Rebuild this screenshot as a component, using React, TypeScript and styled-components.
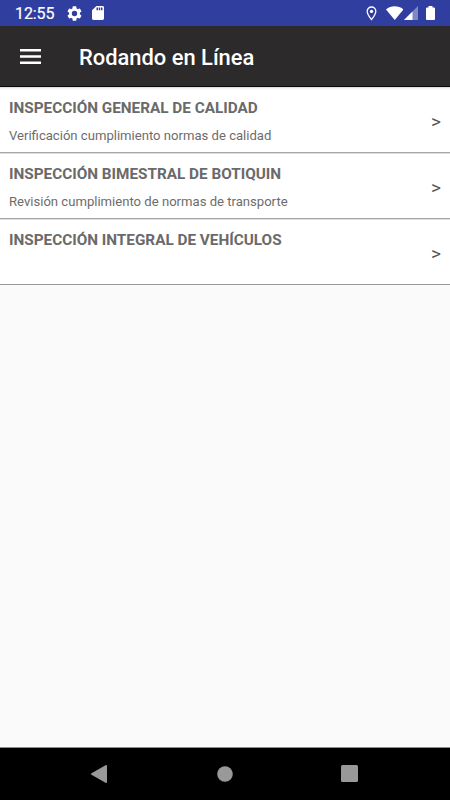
import React from "react";
import styled, { createGlobalStyle } from "styled-components";

const GlobalStyle = createGlobalStyle`
  html, body { margin: 0; background: #fafafa; }
  * { box-sizing: border-box; }
`;

const Screen = styled.div`
  display: flex;
  flex-direction: column;
  width: 100%;
  height: 800px;
  overflow: hidden;
  background: #fafafa;
  font-family: Roboto, "Noto Sans", sans-serif;
`;

const StatusBar = styled.div`
  display: flex;
  align-items: center;
  flex: 0 0 26px;
  padding: 0 15px;
  background: #303f9f;
  color: #fff;
`;

const Clock = styled.span`
  width: 51.5px;
  padding-top: 2px;
  font-size: 16px;
  line-height: 24px;
  font-weight: 400;
  -webkit-text-stroke: 0.2px #fff;
  letter-spacing: -0.1px;
`;

const Glyph = styled.svg<{ $w: number; $h: number; $gap?: number }>`
  flex: none;
  width: ${(p) => p.$w}px;
  height: ${(p) => p.$h}px;
  margin-left: ${(p) => p.$gap ?? 0}px;
`;

const Spacer = styled.div`
  flex: 1;
`;

const Toolbar = styled.header`
  display: flex;
  align-items: center;
  flex: 0 0 61px;
  padding: 0 20px;
  background: #2c2a2b;
  border-bottom: 1px solid #0c0b0c;
`;

const MenuButton = styled.button`
  display: flex;
  width: 59px;
  padding: 0;
  border: 0;
  background: none;
`;

const Title = styled.h1`
  margin: 4px 0 0;
  color: #fff;
  font-size: 21.9px;
  line-height: 28px;
  font-weight: 500;
  white-space: nowrap;
`;

const List = styled.main`
  flex: 1;
  background: #fafafa;
`;

const Row = styled.div`
  display: flex;
  align-items: center;
  height: 66px;
  padding: 0 9px;
  background: #fff;
  border-bottom: 1px solid #a6a6a6;
  box-shadow: inset 0 1px 0 #dedede;

  &:first-child {
    box-shadow: inset 0 1px 0 #dedede, inset 0 3px 2px -1px #f0f0f0;
  }

  &:last-child {
    border-bottom-color: #999;
  }
`;

const RowText = styled.div`
  flex: 1;
  height: 100%;
  padding-top: 11px;
`;

const RowTitle = styled.div`
  color: #6a6a6a;
  font-size: 15.3px;
  line-height: 20px;
  font-weight: 700;
  white-space: nowrap;
`;

const RowDetail = styled.div`
  margin-top: 8px;
  color: #6c6c6c;
  font-size: 13.1px;
  line-height: 20px;
  white-space: nowrap;
`;

const Chevron = styled.span`
  padding-top: 5px;
  color: #555;
  font-size: 19px;
  line-height: 22px;
`;

const NavBar = styled.nav`
  display: flex;
  align-items: center;
  justify-content: space-between;
  flex: 0 0 53px;
  padding: 0 92px 1px 91px;
  background: #000;
  border-top: 1px solid #8c8c8c;
`;

const items = [
  { title: "INSPECCIÓN GENERAL DE CALIDAD", detail: "Verificación cumplimiento normas de calidad" },
  { title: "INSPECCIÓN BIMESTRAL DE BOTIQUIN", detail: "Revisión cumplimiento de normas de transporte" },
  { title: "INSPECCIÓN INTEGRAL DE VEHÍCULOS", detail: "" },
];

export default function App() {
  return (
    <Screen>
      <GlobalStyle />
      <StatusBar>
        <Clock>12:55</Clock>
        <Glyph $w={15} $h={15} viewBox="2 2 20 20" fill="#fff">
          <path d="M19.14 12.94c.04-.3.06-.61.06-.94s-.02-.64-.07-.94l2.03-1.58a.5.5 0 0 0 .12-.61l-1.92-3.32a.49.49 0 0 0-.59-.22l-2.39.96a7 7 0 0 0-1.62-.94l-.36-2.54A.48.48 0 0 0 13.92 2.4h-3.84a.48.48 0 0 0-.48.41l-.36 2.54a7 7 0 0 0-1.62.94l-2.39-.96a.48.48 0 0 0-.59.22L2.72 8.87a.48.48 0 0 0 .12.61l2.03 1.58c-.05.3-.07.62-.07.94s.02.64.07.94l-2.03 1.58a.5.5 0 0 0-.12.61l1.92 3.32c.12.22.37.29.59.22l2.39-.96c.5.38 1.03.7 1.62.94l.36 2.54c.05.24.24.41.48.41h3.84c.24 0 .44-.17.48-.41l.36-2.54a7 7 0 0 0 1.62-.94l2.39.96c.22.08.47 0 .59-.22l1.92-3.32a.49.49 0 0 0-.12-.61zM12 15.6a3.6 3.6 0 1 1 0-7.2 3.6 3.6 0 0 1 0 7.2z" />
        </Glyph>
        <Glyph $w={12} $h={14} $gap={10.5} viewBox="4 2 16 20" preserveAspectRatio="none" fill="#fff">
          <path d="M18 2h-8L4 8v12c0 1.1.9 2 2 2h12c1.1 0 2-.9 2-2V4c0-1.100-.9-2-2-2zm-6 6h-2V4h2zm3 0h-2V4h2zm3 0h-2V4h2z" />
        </Glyph>
        <Spacer />
        <Glyph $w={11} $h={15} viewBox="0 0 11 15">
          <path d="M5.500 1a4.300 4.300 0 0 0-4.300 4.300c0 3.200 4.300 8.300 4.300 8.300s4.300-5.100 4.300-8.300A4.300 4.300 0 0 0 5.500 1z" fill="none" stroke="#fff" strokeWidth="1.300" />
          <circle cx="5.500" cy="5.400" r="1.700" fill="#fff" />
        </Glyph>
        <Glyph $w={17.500} $h={14} $gap={9} viewBox="0 0 18 14" preserveAspectRatio="none" fill="#fff">
          <path d="M0 3.400C5-.9 13-.9 18 3.400L9 14z" />
        </Glyph>
        <Glyph $w={14} $h={14} $gap={1} viewBox="0 0 14 14" fill="#fff">
          <path d="M14 0v14H0z" opacity=".38" />
          <path d="M8.500 5.500V14H0z" />
        </Glyph>
        <Glyph $w={9} $h={14} $gap={8} viewBox="0 0 9 14" fill="#fff">
          <path d="M2.500 0h4v1.400H8q1 0 1 1V13q0 1-1 1H1q-1 0-1-1V2.400q0-1 1-1h1.500z" />
        </Glyph>
      </StatusBar>
      <Toolbar>
        <MenuButton aria-label="Menu">
          <Glyph $w={21} $h={15} viewBox="0 0 21 15" fill="#fff">
            <path d="M0 0h21v2.400H0zM0 6.300h21v2.400H0zM0 12.600h21V15H0z" />
          </Glyph>
        </MenuButton>
        <Title>Rodando en Línea</Title>
      </Toolbar>
      <List>
        {items.map((item) => (
          <Row key={item.title}>
            <RowText>
              <RowTitle>{item.title}</RowTitle>
              <RowDetail>{item.detail}</RowDetail>
            </RowText>
            <Chevron>&gt;</Chevron>
          </Row>
        ))}
      </List>
      <NavBar>
        <Glyph $w={16} $h={18} viewBox="0 0 16 18" fill="#999">
          <path d="M.5 8.200 14.500.2Q16-.4 16 1v16q0 1.400-1.500.8L.5 9.800q-1-.8 0-1.600z" />
        </Glyph>
        <Glyph $w={16} $h={16} $gap={1} viewBox="0 0 16 16" fill="#999">
          <circle cx="8" cy="8" r="7.800" />
        </Glyph>
        <Glyph $w={17} $h={17} viewBox="0 0 17 17" fill="#999">
          <rect width="17" height="17" rx="1.500" />
        </Glyph>
      </NavBar>
    </Screen>
  );
}
